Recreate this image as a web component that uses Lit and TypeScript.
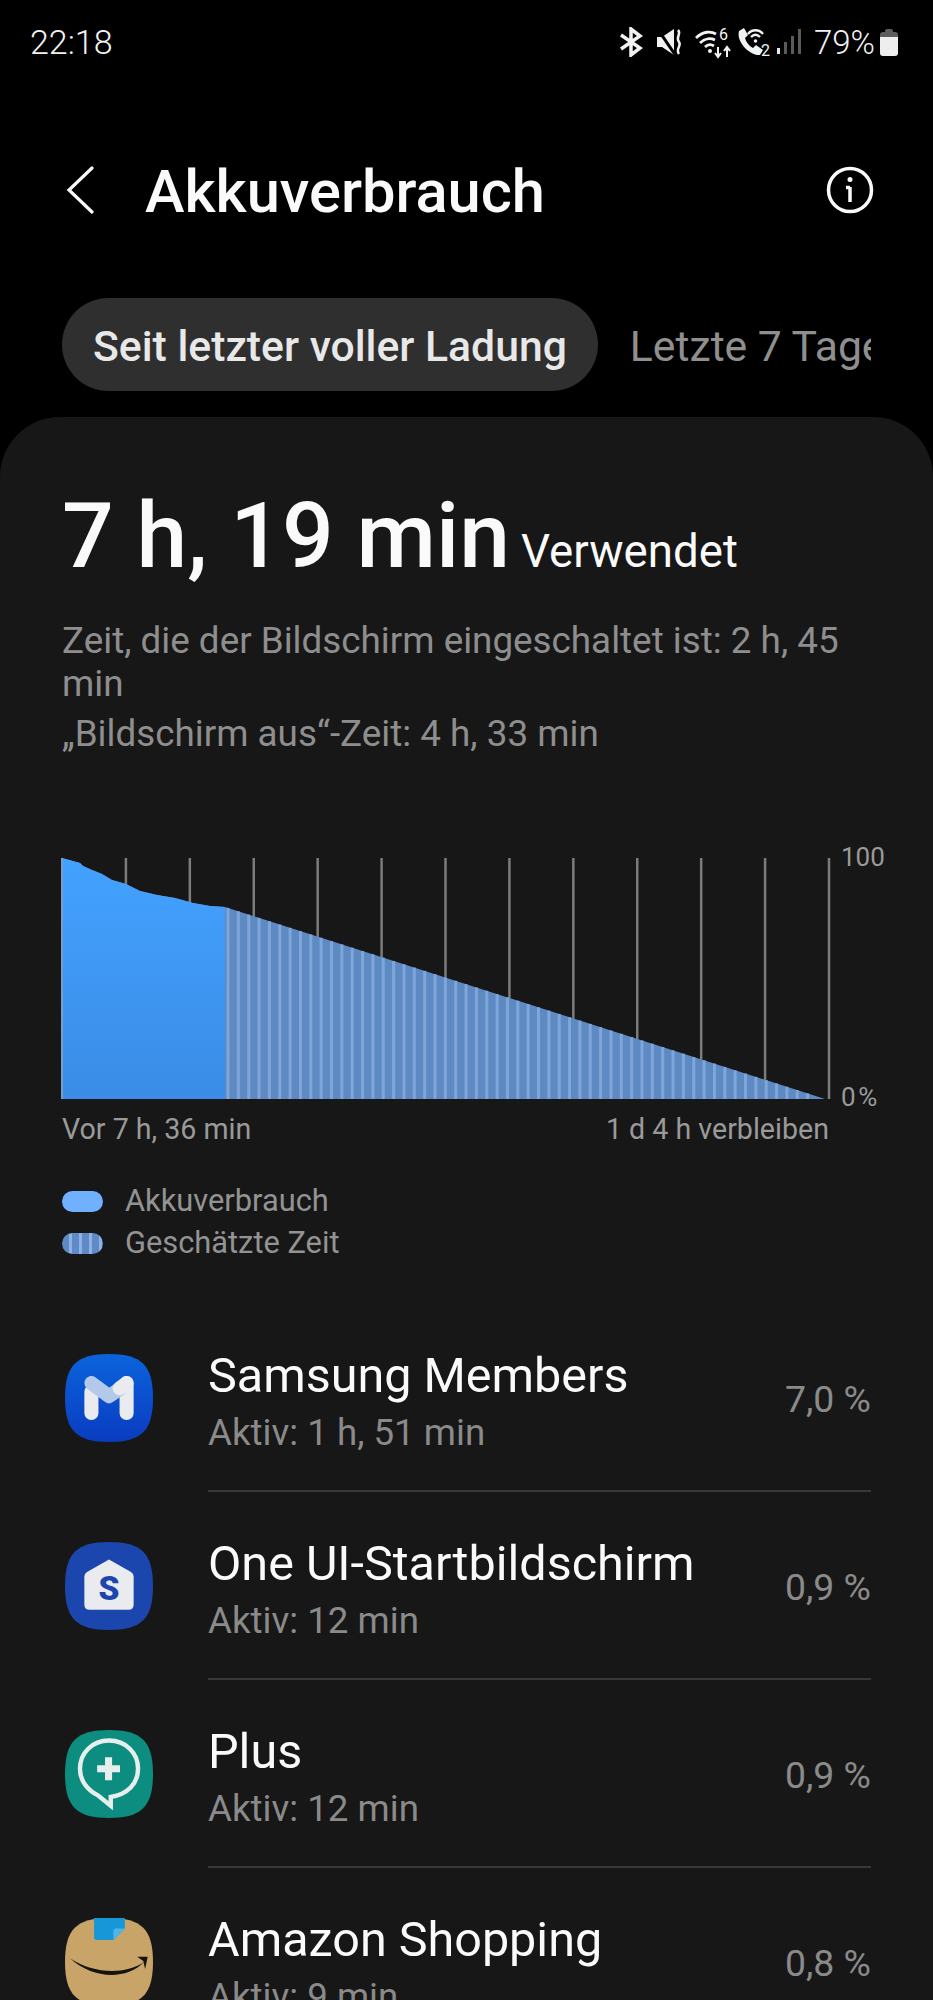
import { LitElement, html, css, svg } from 'lit';
import { customElement } from 'lit/decorators.js';

const CHART_W = 767;
const CHART_H = 241;

// battery curve, in px inside the chart box
const used = [
  [0, 0], [18, 5], [21, 8], [30, 12], [40, 16], [50, 22], [64, 26], [78, 33],
  [95, 37], [113, 40], [131, 45], [148, 48], [163, 49],
];
const LAST = [763, 241];

const gridXs = Array.from({ length: 12 }, (_, i) => (i + 1) * (CHART_W / 12));
const stripeXs = Array.from({ length: 57 }, (_, i) => 166 + i * 10.35);
const lineY = (x: number) => 49 + ((x - 163) * (LAST[1] - 49)) / (LAST[0] - 163);

const apps = [
  { name: 'Samsung Members', active: 'Aktiv: 1 h, 51 min', pct: '7,0 %', icon: 'members' },
  { name: 'One UI-Startbildschirm', active: 'Aktiv: 12 min', pct: '0,9 %', icon: 'home' },
  { name: 'Plus', active: 'Aktiv: 12 min', pct: '0,9 %', icon: 'plus' },
  { name: 'Amazon Shopping', active: 'Aktiv: 9 min', pct: '0,8 %', icon: 'amazon' },
];

const SQUIRCLE = 'M50 0C87 0 100 13 100 50S87 100 50 100 0 87 0 50 13 0 50 0Z';

function appIcon(kind: string) {
  if (kind === 'members') {
    return html`<svg class="app-icon" viewBox="0 0 100 100">
      <defs><linearGradient id="mg" x1="0" y1="0" x2="0" y2="1"><stop offset="0" stop-color="#0b63dc" /><stop offset="1" stop-color="#0a3cc0" /></linearGradient></defs>
      <path d=${SQUIRCLE} fill="url(#mg)" />
      <path d="M30 43V67M70 33V67" stroke="#e9ebef" stroke-width="16" stroke-linecap="round" fill="none" />
      <path d="M30 33L50 48 62 40" stroke="#b2c9e9" stroke-width="16" stroke-linecap="round" stroke-linejoin="round" fill="none" />
      <path d="M70 33L62 39" stroke="#e9ebef" stroke-width="16" stroke-linecap="round" fill="none" />
    </svg>`;
  }
  if (kind === 'home') {
    return html`<svg class="app-icon" viewBox="0 0 100 100">
      <path d=${SQUIRCLE} fill="#1b46ad" />
      <path d="M50 20L75 34Q78 36 78 39V71Q78 77 72 77H28Q22 77 22 71V39Q22 36 25 34Z" fill="#e9ebef" />
      <text x="50" y="66" text-anchor="middle" class="s-mark">S</text>
    </svg>`;
  }
  if (kind === 'plus') {
    return html`<svg class="app-icon" viewBox="0 0 100 100">
      <path d=${SQUIRCLE} fill="#0c8d7f" />
      <path d="M52 86L37 74C25 68 17 57 17 44 17 26 31 12 50 12 69 12 83 26 83 44 83 61 71 73 52 76Z" fill="none" stroke="#e6efed" stroke-width="5" stroke-linejoin="miter" />
      <path d="M36.500 44H62.500M49.500 31V57" stroke="#e6efed" stroke-width="8" fill="none" />
    </svg>`;
  }
  return html`<svg class="app-icon" viewBox="0 0 100 100">
    <path d=${SQUIRCLE} fill="#c8a468" />
    <path d="M33 0H68V12L55 25H36Q33 25 33 22Z" fill="#1797d8" />
    <path d="M55 25V15Q55 12 58 12H68Z" fill="#4fb6ea" />
    <path d="M6 46C30 62 66 66 90 50 68 72 30 68 6 46Z" fill="#16120c" />
    <path d="M82 44L94 44 91 58 89 49Z" fill="#16120c" />
  </svg>`;
}

@customElement('app-root')
export class AppRoot extends LitElement {
  static styles = css`
    :host {
      display: block;
      height: 2000px;
      overflow: hidden;
      background: #000;
      color: #fafafa;
      font-family: Roboto, 'Noto Sans', sans-serif;
    }

    .status {
      height: 84px;
      padding: 0 35px 0 30px;
      display: flex;
      align-items: center;
      justify-content: space-between;
    }
    .time {
      font-size: 34px;
      font-weight: 300;
      color: #f2f2f2;
    }
    .status-right {
      display: flex;
      align-items: center;
    }
    .status-right svg {
      display: block;
      flex: none;
    }
    .batt-text {
      font-size: 33px;
      font-weight: 300;
      margin: 0 5px 0 13px;
      color: #f2f2f2;
    }
    .tiny {
      font-family: Roboto, sans-serif;
      font-size: 16px;
      fill: #f2f2f2;
    }

    .header {
      height: 212px;
      padding: 0 59px 0 66px;
      display: flex;
      align-items: center;
    }
    .header h1 {
      margin: 0 0 0 49px;
      padding-top: 3px;
      flex: 1;
      font-size: 59.6px;
      font-weight: 500;
      line-height: 70px;
    }

    .tabs {
      margin: 2px 62px 26px;
      height: 93px;
      display: flex;
      align-items: center;
      gap: 32px;
      overflow: hidden;
      font-size: 42.700px;
      line-height: 96px;
      white-space: nowrap;
    }
    .tab {
      flex: none;
      height: 93px;
      color: #8f8f8f;
    }
    .tab.on {
      padding: 0 31px;
      border-radius: 47px;
      background: #2f2f2f;
      color: #e8e8e8;
      font-weight: 500;
    }

    .card {
      background: #171717;
      border-radius: 60px 60px 0 0;
      padding: 69px 62px 0 62px;
      height: 1583px;
      box-sizing: border-box;
    }
    .hero {
      display: flex;
      align-items: baseline;
      gap: 11px;
      line-height: 100px;
    }
    .hero b {
      font-size: 91.200px;
      font-weight: 500;
    }
    .hero span {
      font-size: 45.700px;
    }
    .info {
      margin: 17px 0 0;
      font-size: 36.800px;
      line-height: 43px;
      color: #8e8e8e;
    }
    .info + .info {
      margin-top: 7px;
    }

    .chart {
      display: block;
      margin-top: 103px;
      overflow: visible;
    }
    .axis {
      font-family: Roboto, sans-serif;
      font-size: 26px;
      fill: #9a9a9a;
    }
    .range {
      width: ${CHART_W}px;
      margin-top: 12px;
      display: flex;
      justify-content: space-between;
      font-size: 28.600px;
      line-height: 36px;
      color: #9a9a9a;
    }

    .legend {
      margin-top: 33px;
      font-size: 30.800px;
      line-height: 42px;
      color: #939393;
    }
    .legend div {
      display: flex;
      align-items: center;
      gap: 22px;
    }
    .swatch {
      width: 41px;
      height: 21px;
      border-radius: 11px;
      background: #6fb0ff;
    }
    .swatch.est {
      background: repeating-linear-gradient(90deg, #5e8bc8 0 7px, #8fb2e2 7px 10px);
    }

    .list {
      margin-top: 40px;
    }
    .row {
      display: flex;
      gap: 55px;
      height: 188px;
      padding-left: 3px;
    }
    .app-icon {
      flex: none;
      align-self: center;
      width: 88px;
      height: 88px;
    }
    .s-mark {
      font-family: Roboto, sans-serif;
      font-size: 38px;
      font-weight: 900;
      fill: #1b46ad;
    }
    .row-body {
      flex: 1;
      display: flex;
      align-items: center;
      justify-content: space-between;
      border-bottom: 2px solid #383838;
    }
    .row-text {
      padding-top: 14px;
    }
    .name {
      font-size: 48.500px;
      line-height: 58px;
    }
    .active {
      font-size: 36.700px;
      line-height: 56px;
      color: #8a8a8a;
    }
    .pct {
      padding-top: 4px;
      font-size: 37.400px;
      color: #8a8a8a;
    }
  `;

  private chart() {
    const pts = used.map((p) => p.join(',')).join(' ');
    const [ex] = used[used.length - 1];
    return svg`
      <defs>
        <linearGradient id="fill" x1="0" y1="0" x2="0" y2="1">
          <stop offset="0" stop-color="#43a2ff" />
          <stop offset="1" stop-color="#3a8ce6" />
        </linearGradient>
      </defs>
      ${gridXs.map((x) => svg`<line x1=${x} x2=${x} y1="0" y2=${CHART_H} stroke="#7c7c7c" stroke-width="2.500" />`)}
      <polygon points=${`${pts} ${LAST[0]},${LAST[1]} ${ex},${LAST[1]}`} fill="#5e8ac4" />
      ${stripeXs.map((x) => svg`<line x1=${x} x2=${x} y1=${lineY(x)} y2=${CHART_H} stroke="#80a5d8" stroke-width="3" />`)}
      <polygon points=${`${pts} ${ex},${CHART_H} 0,${CHART_H}`} fill="url(#fill)" />
      <line x1="0" x2="0" y1="0" y2=${CHART_H} stroke="#7a9cc8" stroke-width="2" />
      <text class="axis" x="779" y="8">100</text>
      <text class="axis" x="779" y="248">0\u200A%</text>
    `;
  }

  render() {
    return html`
      <div class="status">
        <span class="time">22:18</span>
        <div class="status-right">
          <svg width="24" height="30" viewBox="0 0 24 30" fill="none" stroke="#f2f2f2" stroke-width="3.500">
            <path d="M2 8L21 21 12 28V2L21 9 2 22" />
          </svg>
          <svg style="margin-left:13px" width="27" height="28" viewBox="0 0 27 28" fill="none">
            <path d="M1 9H6L18 1V27L6 19H1Z" fill="#f2f2f2" />
            <path d="M1 0L20 28" stroke="#000" stroke-width="3" />
            <path d="M22 2C26 6 19 9 23 14 26 18 19 21 23 26" stroke="#f2f2f2" stroke-width="2.500" />
          </svg>
          <svg style="margin-left:12px" width="38" height="36" viewBox="0 0 38 36" fill="none" stroke="#f2f2f2" stroke-width="2.800">
            <g transform="translate(0 3)">
              <path d="M1 11C8 4 16 4 21 7M5 16C10 11 16 11 20 13M10 20C13 17 16 17 19 19" />
              <circle cx="15" cy="24" r="2" fill="#f2f2f2" stroke="none" />
              <text class="tiny" x="24" y="13" stroke="none">6</text>
              <path d="M23 20V30M20 26L23 30 26 26M32 30V20M29 24L32 20 35 24" stroke-width="2" />
            </g>
          </svg>
          <svg style="margin-left:3px" width="36" height="36" viewBox="0 0 36 36" fill="none" stroke="#f2f2f2" stroke-width="2.400">
            <g transform="translate(0 2)">
              <path d="M3 5L8 2 12 9 9 12C10 16 13 20 17 22L20 19 27 24 24 29C14 30 0 16 3 5Z" fill="#f2f2f2" stroke="none" />
              <path d="M12 8C16 3 23 3 27 8M15 11C18 8 21 8 24 11" />
              <circle cx="19.500" cy="15" r="1.800" fill="#f2f2f2" stroke="none" />
              <text class="tiny" x="25" y="30" stroke="none">2</text>
            </g>
          </svg>
          <svg style="margin-left:5px" width="24" height="26" viewBox="0 0 24 26">
            <rect x="0" y="19" width="3" height="6" fill="#e8e8e8" />
            <rect x="7" y="13" width="3" height="12" fill="#5a5a5a" />
            <rect x="14" y="7" width="3" height="18" fill="#5a5a5a" />
            <rect x="21" y="0" width="3" height="25" fill="#5a5a5a" />
          </svg>
          <span class="batt-text">79%</span>
          <svg width="18" height="27" viewBox="0 0 18 27">
            <path d="M5 2Q5 0 7 0H11Q13 0 13 2V3H15Q18 3 18 6V8H0V6Q0 3 3 3H5Z" fill="#5d5d5d" />
            <path d="M0 8H18V24Q18 27 15 27H3Q0 27 0 24Z" fill="#eeeeee" />
          </svg>
        </div>
      </div>

      <div class="header">
        <svg width="30" height="48" viewBox="0 0 30 48" fill="none" stroke="#fafafa" stroke-width="3.200" stroke-linecap="round">
          <path d="M26 2L3 24 26 46" />
        </svg>
        <h1>Akkuverbrauch</h1>
        <svg width="48" height="48" viewBox="0 0 48 48" fill="none" stroke="#fafafa" stroke-width="3.500">
          <circle cx="24" cy="24" r="21.500" />
          <path d="M24 21V36M20 21.500H24" />
          <circle cx="24" cy="13.500" r="2.500" fill="#fafafa" stroke="none" />
        </svg>
      </div>

      <div class="tabs">
        <div class="tab on">Seit letzter voller Ladung</div>
        <div class="tab">Letzte 7 Tage</div>
      </div>

      <div class="card">
        <div class="hero"><b>7 h, 19 min</b><span>Verwendet</span></div>
        <p class="info">Zeit, die der Bildschirm eingeschaltet ist: 2 h, 45 min</p>
        <p class="info">„Bildschirm aus“-Zeit: 4 h, 33 min</p>

        <svg class="chart" width=${CHART_W} height=${CHART_H} viewBox="0 0 ${CHART_W} ${CHART_H}">${this.chart()}</svg>
        <div class="range"><span>Vor 7 h, 36 min</span><span>1 d 4 h verbleiben</span></div>

        <div class="legend">
          <div><i class="swatch"></i>Akkuverbrauch</div>
          <div><i class="swatch est"></i>Geschätzte Zeit</div>
        </div>

        <div class="list">
          ${apps.map(
            (a) => html`
              <div class="row">
                ${appIcon(a.icon)}
                <div class="row-body">
                  <div class="row-text">
                    <div class="name">${a.name}</div>
                    <div class="active">${a.active}</div>
                  </div>
                  <div class="pct">${a.pct}</div>
                </div>
              </div>
            `
          )}
        </div>
      </div>
    `;
  }
}
